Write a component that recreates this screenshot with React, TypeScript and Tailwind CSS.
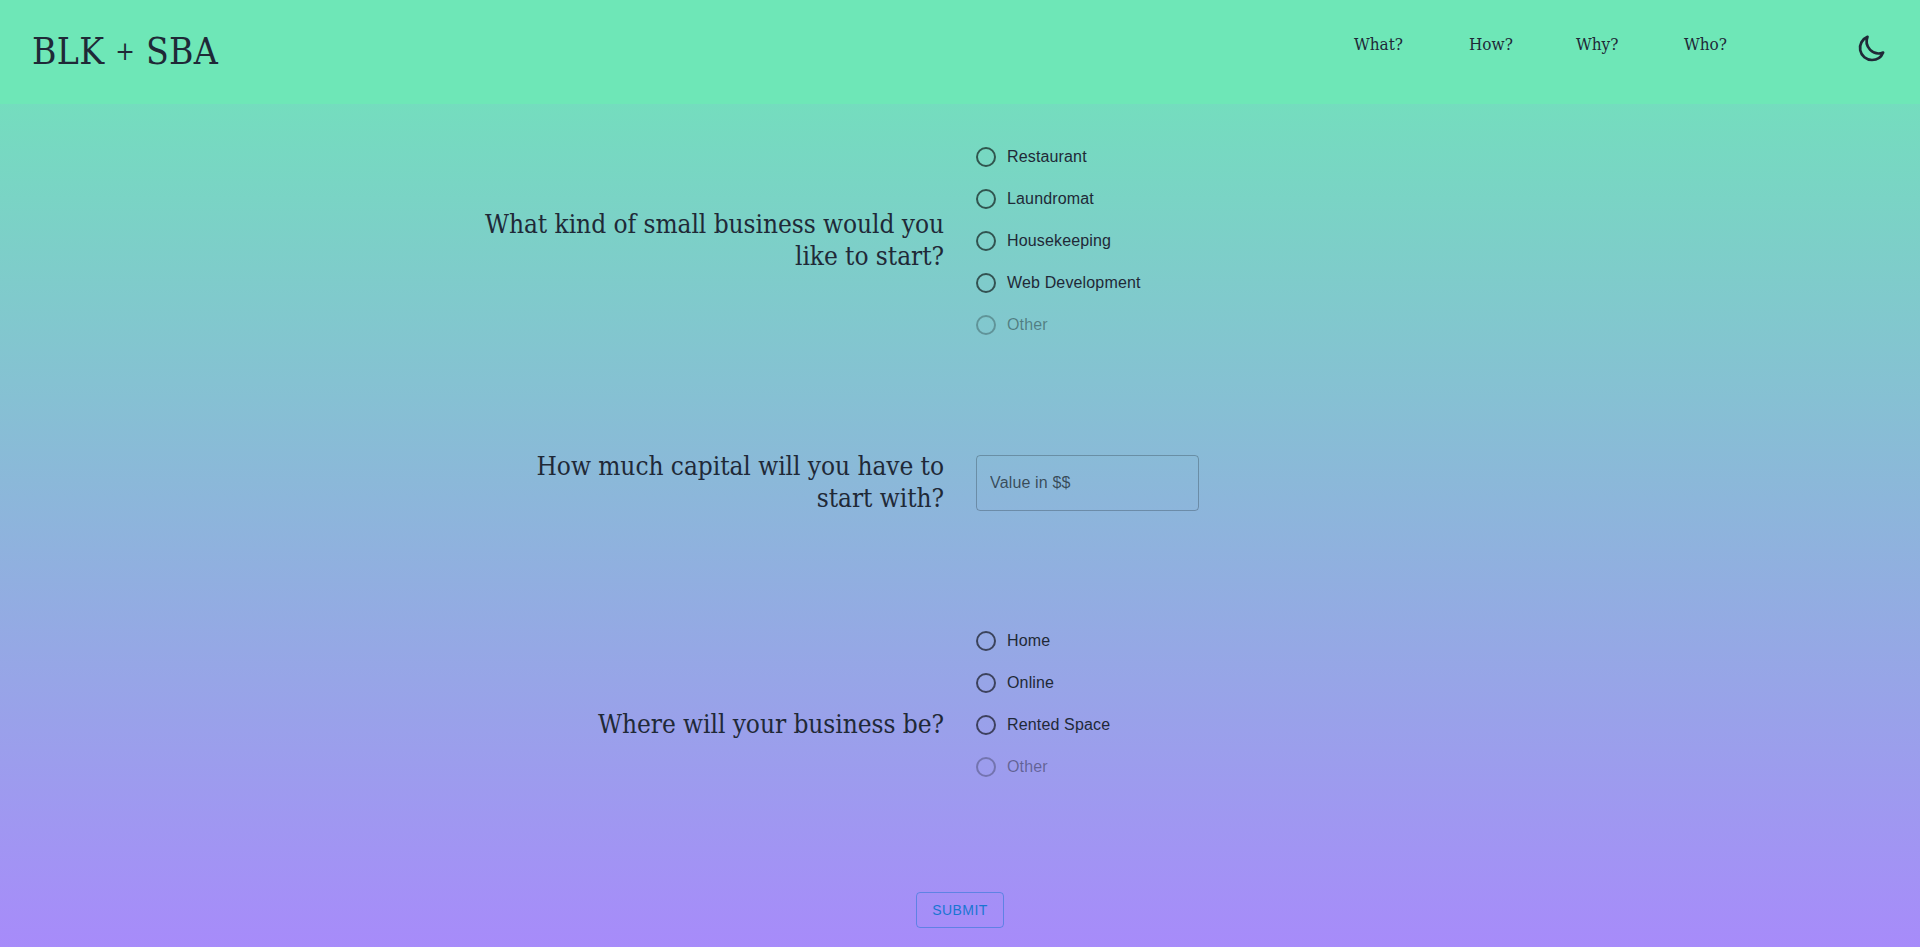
import { FC, ReactNode } from "react";

interface Option {
  label: string;
  disabled?: boolean;
}

const navLinks = [
  { label: "What?", width: "w-[51px]" },
  { label: "How?", width: "w-[43px]" },
  { label: "Why?", width: "w-[44px]" },
  { label: "Who?", width: "w-[44px]" },
];

const businessTypes: Option[] = [
  { label: "Restaurant" },
  { label: "Laundromat" },
  { label: "Housekeeping" },
  { label: "Web Development" },
  { label: "Other", disabled: true },
];

const locations: Option[] = [
  { label: "Home" },
  { label: "Online" },
  { label: "Rented Space" },
  { label: "Other", disabled: true },
];

const MoonIcon: FC = () => {
  return (
    <svg className="size-8" viewBox="0 0 24 24" fill="none" stroke="currentColor" strokeWidth={2}>
      <path
        strokeLinecap="round"
        strokeLinejoin="round"
        d="M20.354 15.354A9 9 0 018.646 3.646 9.003 9.003 0 0012 21a9.003 9.003 0 008.354-5.646z"
      />
    </svg>
  );
};

const Header: FC = () => {
  return (
    <header className="flex h-[104px] items-start justify-between bg-[#6ee7b7] p-8 font-['DejaVu_Serif_Condensed','DejaVu_Serif',serif]">
      <h1 className="text-[37px] leading-10 tracking-[0.3px] whitespace-nowrap">
        BLK <span className="align-[4px] text-[26px] leading-none">+</span> SBA
      </h1>
      <div className="flex">
        <nav className="mr-32 flex gap-16 text-[17px] leading-[25px]">
          {navLinks.map(({ label, width }) => (
            <a key={label} href="#" className={`${width} whitespace-nowrap`}>
              {label}
            </a>
          ))}
        </nav>
        <MoonIcon />
      </div>
    </header>
  );
};

const RadioOption: FC<{ name: string; option: Option }> = ({ name, option }) => {
  return (
    <label className="flex h-[42px] items-center gap-[11px]">
      <input
        type="radio"
        name={name}
        disabled={option.disabled}
        className="size-5 appearance-none rounded-full border-2 border-black/60 checked:bg-black/60 disabled:border-black/26"
      />
      <span className={option.disabled ? "text-black/38" : ""}>{option.label}</span>
    </label>
  );
};

const Question: FC<{ lines: string[]; children: ReactNode }> = ({ lines, children }) => {
  return (
    <section className="grid grid-cols-2 items-center gap-8">
      <h2 className="-mt-px mb-px text-right font-['DejaVu_Serif_Condensed','DejaVu_Serif',serif] text-[26px] leading-8 tracking-[-0.05px] whitespace-nowrap">
        {lines.map((line) => (
          <span key={line} className="block">
            {line}
          </span>
        ))}
      </h2>
      <div className="tracking-[0.15px]">{children}</div>
    </section>
  );
};

const App: FC = () => {
  return (
    <div className="h-[947px] overflow-hidden bg-linear-to-b/srgb from-[#6ee7b7] to-[#a78bfa] font-['Liberation_Sans',Arial,sans-serif] text-[#1f2937]">
      <Header />
      <form className="flex flex-col gap-[105px] pt-8">
        <Question lines={["What kind of small business would you", "like to start?"]}>
          {businessTypes.map((option) => (
            <RadioOption key={option.label} name="business" option={option} />
          ))}
        </Question>
        <Question lines={["How much capital will you have to", "start with?"]}>
          <input
            placeholder="Value in $$"
            className="block h-14 w-[223px] rounded border border-black/23 bg-transparent px-[13px] tracking-[0.15px] placeholder:text-black/60"
          />
        </Question>
        <Question lines={["Where will your business be?"]}>
          <div className="h-[210px]">
            {locations.map((option) => (
              <RadioOption key={option.label} name="location" option={option} />
            ))}
          </div>
        </Question>
        <button
          type="button"
          className="-mt-[43px] h-9 w-22 self-center rounded border border-[#1976d2]/50 text-sm tracking-[0.4px] text-[#1976d2]"
        >
          SUBMIT
        </button>
      </form>
    </div>
  );
};

export default App;
